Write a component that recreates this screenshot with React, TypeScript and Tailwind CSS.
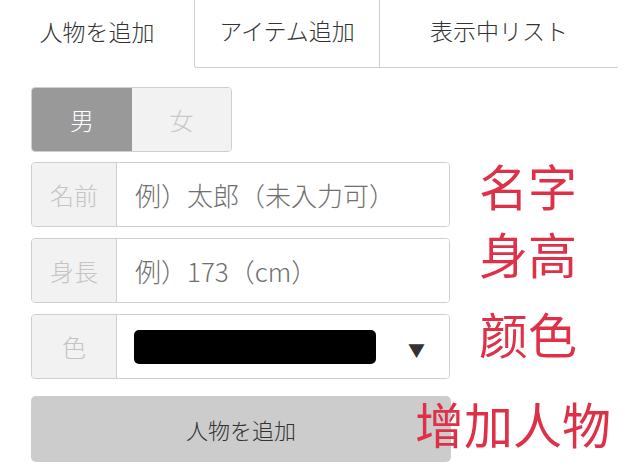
const jp = { fontFamily: '"Noto Sans CJK JP", "Noto Sans", sans-serif' };
const sc = { fontFamily: '"Noto Sans CJK SC", "Noto Sans", sans-serif' };

function Row({ label, children }: { label: string; children: React.ReactNode }) {
  return (
    <div className="flex h-[65px] w-[419px] rounded-[4px] border border-[#cfcfcf] overflow-hidden">
      <div className="w-[85px] shrink-0 flex items-center justify-center bg-[#f2f2f2] border-r border-[#cfcfcf] text-[24px] text-[#c4c4c4]">
        {label}
      </div>
      <div className="flex-1 flex items-center bg-white">{children}</div>
    </div>
  );
}

export default function App() {
  return (
    <div className="relative w-[634px] h-[472px] bg-white overflow-hidden font-light" style={jp}>
      {/* tabs */}
      <div className="flex h-[68px] w-[618px] text-[23px] text-[#333]">
        <div className="w-[194px] flex items-center justify-center pb-[6px]">人物を追加</div>
        <div className="w-[185px] flex items-center justify-center pb-[6px] border-l border-b border-[#cfcfcf] rounded-bl-[3px]">
          アイテム追加
        </div>
        <div className="flex-1 flex items-center justify-center pb-[6px] border-l border-b border-[#cfcfcf]">
          表示中リスト
        </div>
      </div>

      <div className="flex flex-col pl-[31px] pt-[19px]">
        {/* gender toggle */}
        <div className="flex h-[65px] w-[201px] rounded-[4px] border border-[#cfcfcf] overflow-hidden text-[24px]">
          <div className="w-[100px] flex items-center justify-center bg-[#999999] text-white">男</div>
          <div className="flex-1 flex items-center justify-center bg-[#f2f2f2] text-[#c8c8c8]">女</div>
        </div>

        <div className="flex flex-col gap-[11px] mt-[10px]">
          <Row label="名前">
            <span className="pl-[18px] text-[26px] text-[#6f6f6f]">例）太郎（未入力可）</span>
          </Row>
          <Row label="身長">
            <span className="pl-[18px] text-[26px] text-[#6f6f6f]">例）173（cm）</span>
          </Row>
          <Row label="色">
            <div className="flex items-center w-full pl-[17px] pr-[24px]">
              <div className="w-[242px] h-[34px] rounded-[5px] bg-black" />
              <span className="ml-auto mt-[6px] text-[17px] leading-none text-[#333]">▼</span>
            </div>
          </Row>
        </div>

        <button className="mt-[17px] h-[66px] w-[420px] rounded-[5px] bg-[#cccccc] text-[22px] text-[#333] font-light">
          人物を追加
        </button>
      </div>

      {/* red annotations */}
      <div className="absolute left-[479px] top-[160px] text-[49px] leading-none font-normal text-[#de3148]" style={sc}>名字</div>
      <div className="absolute left-[479px] top-[228px] text-[49px] leading-none font-normal text-[#de3148]" style={sc}>身高</div>
      <div className="absolute left-[479px] top-[308px] text-[49px] leading-none font-normal text-[#de3148]" style={sc}>颜色</div>
      <div className="absolute left-[415px] top-[398px] text-[49px] leading-none font-normal text-[#de3148]" style={sc}>增加人物</div>
    </div>
  );
}
